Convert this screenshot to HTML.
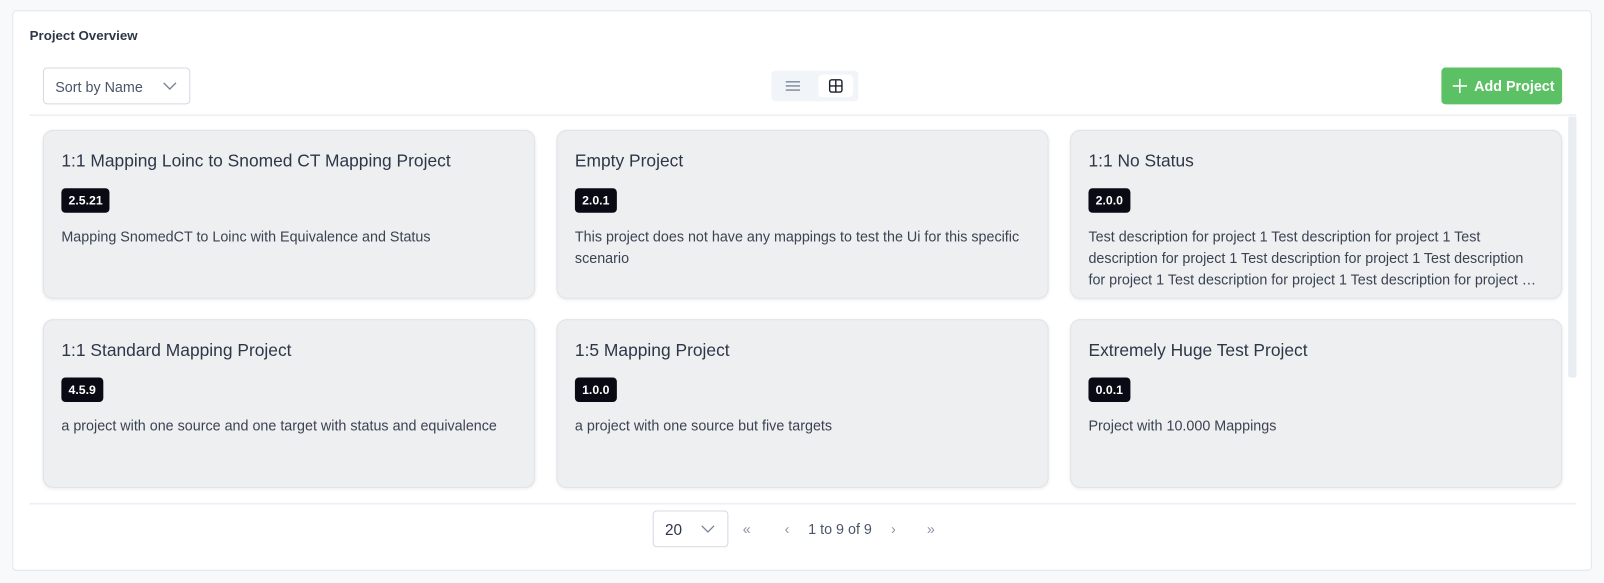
<!DOCTYPE html>
<html><head><meta charset="utf-8"><style>
*{box-sizing:border-box;margin:0;padding:0}
body{width:1604px;height:583px;background:#f8f9fb;font-family:"Liberation Sans",sans-serif;color:#2d3748;position:relative;overflow:hidden}
.wrap{position:absolute;left:0;top:0;width:1568px;height:570px;transform:scale(1.023);transform-origin:0 0}
.panel{position:absolute;left:12px;top:10px;width:1544px;height:548px;background:#fff;border:1px solid #e2e6ee;border-radius:4px}
.h{position:absolute;left:16px;top:16px;font-size:13px;font-weight:bold;color:#2d3748}
.sort{position:absolute;left:29px;top:55px;width:144px;height:36px;border:1px solid #d4d9e2;border-radius:4px;font-size:14px;color:#4a5568;padding:10px 0 0 11px}
.sort svg,.pg svg.c{position:absolute;right:12px;top:12px}
.toggle{position:absolute;left:741px;top:58px;width:85px;height:30px;background:#f1f4f8;border-radius:4px}
.toggle .on{position:absolute;left:46px;top:4px;width:34px;height:22px;background:#fff;border-radius:4px}
.add{position:absolute;left:1396px;top:55px;width:118px;height:36px;background:#5cc164;border-radius:4px;color:#fff;font-size:14px;font-weight:bold;padding:10px 0 0 32px}
.sep{position:absolute;left:16px;width:1512px;height:1px;background:#e2e6ee}
.scroll{position:absolute;left:1520px;top:103px;width:8px;height:255px;background:#e9ecf0;border-radius:2px}
.card{position:absolute;width:481px;height:165px;background:#eeeff1;border:1px solid #e0e3e8;border-radius:10px;box-shadow:0 1px 3px rgba(0,0,0,.08);padding:0 17px}
.card h3{font-weight:normal;font-size:17px;color:#2d3748;margin-top:20px;height:20px;white-space:nowrap}
.b{display:inline-block;margin-top:16px;background:#0a0a14;color:#fff;font-size:12px;font-weight:bold;padding:5px 7px;border-radius:4px;line-height:14px}
.card p{margin-top:13px;font-size:14px;line-height:21px;color:#3a4352;overflow:hidden;display:-webkit-box;-webkit-line-clamp:3;-webkit-box-orient:vertical}
.pg{position:absolute;left:625px;top:488px;width:74px;height:36px;border:1px solid #d4d9e2;border-radius:4px;font-size:15px;padding:10px 0 0 11px;color:#2d3748}
.nav{position:absolute;top:498px;font-size:14px;color:#8a94a6}
</style></head><body><div class="wrap">
<div class="panel">
<div class="h">Project Overview</div>
<div class="sort">Sort by Name<svg width="14" height="10" viewBox="0 0 14 10"><path d="M1 2l6 6 6-6" fill="none" stroke="#7a8496" stroke-width="1.3"/></svg></div>
<div class="toggle"><svg style="position:absolute;left:14px;top:9px" width="14" height="12" viewBox="0 0 14 12"><path d="M0 2h14M0 6h14M0 10h14" stroke="#7a8496" stroke-width="1.3"/></svg><div class="on"><svg style="position:absolute;left:10px;top:4px" width="14" height="14" viewBox="0 0 14 14"><rect x="1" y="1" width="12" height="12" rx="2" fill="none" stroke="#1a202c" stroke-width="1.4"/><path d="M7 1v12M1 7h12" stroke="#1a202c" stroke-width="1.4"/></svg></div></div>
<div class="add"><svg style="position:absolute;left:11px;top:11px" width="14" height="14" viewBox="0 0 14 14"><path d="M7 0v14M0 7h14" stroke="#fff" stroke-width="1.5"/></svg>Add Project</div>
<div class="sep" style="top:101px"></div>
<div class="scroll"></div>
<div class="card" style="left:29px;top:116px"><h3>1:1 Mapping Loinc to Snomed CT Mapping Project</h3><span class="b">2.5.21</span><p>Mapping SnomedCT to Loinc with Equivalence and Status</p></div>
<div class="card" style="left:531px;top:116px"><h3>Empty Project</h3><span class="b">2.0.1</span><p>This project does not have any mappings to test the Ui for this specific scenario</p></div>
<div class="card" style="left:1033px;top:116px"><h3>1:1 No Status</h3><span class="b">2.0.0</span><p>Test description for project 1 Test description for project 1 Test description for project 1 Test description for project 1 Test description for project 1 Test description for project 1 Test description for project 1 Test description</p></div>
<div class="card" style="left:29px;top:301px"><h3>1:1 Standard Mapping Project</h3><span class="b">4.5.9</span><p>a project with one source and one target with status and equivalence</p></div>
<div class="card" style="left:531px;top:301px"><h3>1:5 Mapping Project</h3><span class="b">1.0.0</span><p>a project with one source but five targets</p></div>
<div class="card" style="left:1033px;top:301px"><h3>Extremely Huge Test Project</h3><span class="b">0.0.1</span><p>Project with 10.000 Mappings</p></div>
<div class="sep" style="top:481px"></div>
<div class="pg">20<svg class="c" width="14" height="10" viewBox="0 0 14 10"><path d="M1 2l6 6 6-6" fill="none" stroke="#7a8496" stroke-width="1.3"/></svg></div>
<div class="nav" style="left:713px">«</div>
<div class="nav" style="left:754px">‹</div>
<div class="nav" style="left:777px;color:#4a5568">1 to 9 of 9</div>
<div class="nav" style="left:858px">›</div>
<div class="nav" style="left:893px">»</div>
</div>
</div></body></html>
